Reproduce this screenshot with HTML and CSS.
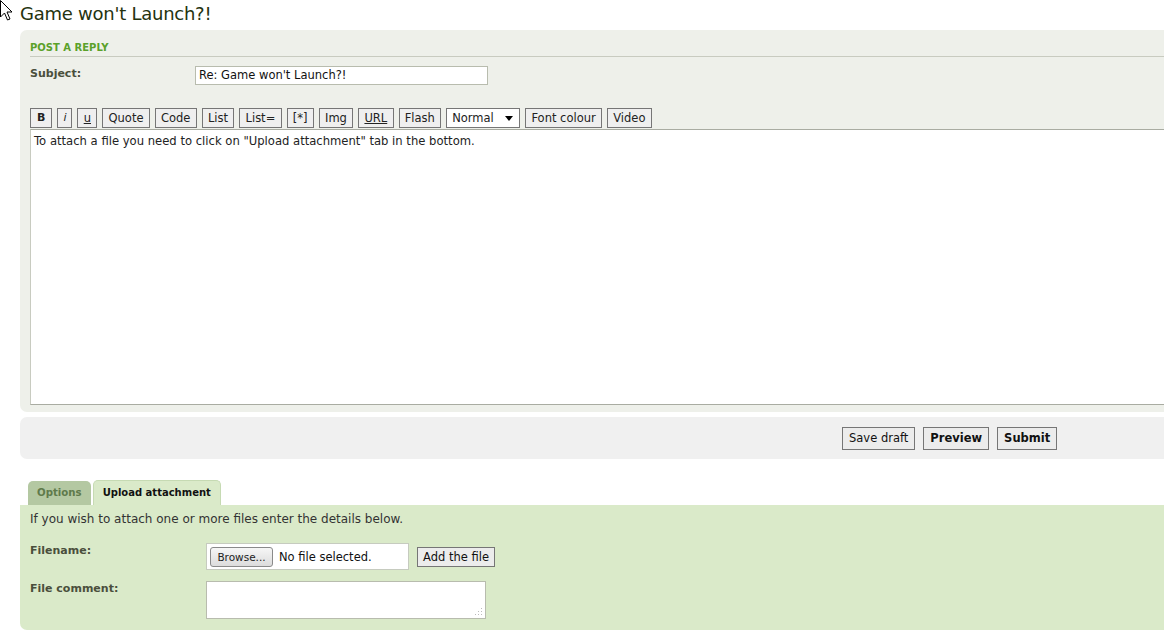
FILE: index.html
```html
<!DOCTYPE html>
<html>
<head>
<meta charset="utf-8">
<link rel="stylesheet" href="styles.css">
</head>
<body>
<svg class="cursor" width="13" height="21" viewBox="0 0 13 21"><path d="M0.5 0.5 L0.5 17 L4.5 13 L7.5 20 L10 19 L7 12 L12 12 Z" fill="#fff" stroke="#000" stroke-width="1"/></svg>
<div class="page">
  <h2 class="title">Game won't Launch?!</h2>

  <div class="panel post">
    <h3 class="ptitle">POST A REPLY</h3>
    <div class="subject-row">
      <label class="lbl">Subject:</label>
      <div class="input subject">Re: Game won't Launch?!</div>
    </div>
    <div class="toolbar">
      <span class="btn b">B</span>
      <span class="btn i">i</span>
      <span class="btn u">u</span>
      <span class="btn">Quote</span>
      <span class="btn">Code</span>
      <span class="btn">List</span>
      <span class="btn">List=</span>
      <span class="btn">[*]</span>
      <span class="btn">Img</span>
      <span class="btn u">URL</span>
      <span class="btn">Flash</span>
      <span class="select">Normal<svg width="8" height="5" viewBox="0 0 8 5"><path d="M0 0 H8 L4 5 Z" fill="#000"/></svg></span>
      <span class="btn">Font colour</span>
      <span class="btn">Video</span>
    </div>
    <div class="editor">To attach a file you need to click on "Upload attachment" tab in the bottom.</div>
  </div>

  <div class="panel actions">
    <span class="abtn">Save draft</span>
    <span class="abtn bold">Preview</span>
    <span class="abtn bold">Submit</span>
  </div>

  <div class="tabs">
    <span class="tab">Options</span>
    <span class="tab active">Upload attachment</span>
  </div>
  <div class="panel attach">
    <p class="intro">If you wish to attach one or more files enter the details below.</p>
    <div class="frow">
      <label class="lbl">Filename:</label>
      <div class="file"><span class="browse">Browse...</span><span class="nofile">No file selected.</span></div>
      <span class="addbtn">Add the file</span>
    </div>
    <div class="frow comment">
      <label class="lbl">File comment:</label>
      <div class="ta"><svg class="grip" width="8" height="8" viewBox="0 0 8 8"><g fill="#bbb"><rect x="6" y="0" width="1" height="1"/><rect x="3" y="3" width="1" height="1"/><rect x="6" y="3" width="1" height="1"/><rect x="0" y="6" width="1" height="1"/><rect x="3" y="6" width="1" height="1"/><rect x="6" y="6" width="1" height="1"/></g></svg></div>
    </div>
  </div>
</div>
</body>
</html>
```
FILE: styles.css
```css
html, body {
  margin: 0;
  padding: 0;
  background: #fff;
  overflow: hidden;
}
body {
  width: 1164px;
  height: 641px;
  position: relative;
  font-family: "DejaVu Sans", Verdana, sans-serif;
  font-size: 11px;
  color: #333;
}
.cursor {
  position: absolute;
  left: 0;
  top: 0;
}
.page {
  padding-left: 20px;
  width: 1300px;
}
.title {
  margin: 0;
  padding-top: 3px;
  height: 27px;
  font-size: 18px;
  letter-spacing: -0.25px;
  font-weight: normal;
  color: #25330f;
  line-height: 22px;
}
.panel {
  border-radius: 7px 0 0 7px;
}
.post {
  background: #eef0ea;
  padding: 9px 0 8px 10px;
  height: 365px;
}
.ptitle {
  margin: 0;
  font-size: 10px;
  font-weight: bold;
  color: #5ba12a;
  height: 17px;
  line-height: 17px;
  border-bottom: 1px solid #c8cbc0;
}
.subject-row {
  display: flex;
  align-items: flex-start;
  padding-top: 9px;
  height: 42px;
}
.lbl {
  font-weight: bold;
  color: #4a4f3c;
  width: 165px;
  line-height: 14px;
}
.subject-row .lbl {
  margin-top: 1px;
}
.input {
  box-sizing: border-box;
  background: #fff;
  border: 1px solid #b8bcae;
  height: 19px;
  line-height: 17px;
  padding: 0 3px;
  color: #111;
  font-size: 11.5px;
}
.subject {
  width: 293px;
}
.toolbar {
  display: flex;
  gap: 5px;
  height: 21px;
}
.btn, .select {
  box-sizing: border-box;
  height: 20px;
  border: 1px solid #767676;
  background: #efefef;
  padding: 0 5.25px;
  line-height: 18px;
  color: #222;
  font-size: 11.5px;
}
.btn.b { font-weight: bold; padding: 0 6px; font-size: 11px; }
.btn.i { font-style: italic; padding: 0 5px; font-size: 11px; }
.btn.u { text-decoration: underline; }
.select {
  width: 74px;
  background: #fff;
  display: flex;
  justify-content: space-between;
  align-items: center;
  padding: 0 6px 0 5px;
}
.editor {
  box-sizing: border-box;
  height: 276px;
  background: #fff;
  border-top: 1px solid #a9aca2;
  border-left: 1px solid #c8cbc0;
  border-bottom: 1px solid #a9aca2;
  padding: 4px 3px;
  color: #222;
  line-height: 14px;
  font-size: 11.6px;
}
.actions {
  margin-top: 5px;
  background: #f0f0f0;
  height: 42px;
  display: flex;
  align-items: center;
  gap: 8px;
  padding-left: 822px;
}
.abtn {
  box-sizing: border-box;
  height: 23px;
  border: 1px solid #767676;
  background: #ececec;
  padding: 0 6px;
  line-height: 21px;
  font-size: 11.5px;
  color: #111;
}
.abtn.bold { font-weight: bold; }
.tabs {
  margin-top: 22px;
  padding-left: 8px;
  display: flex;
  gap: 2px;
  height: 24px;
  align-items: flex-end;
}
.tab {
  box-sizing: border-box;
  height: 24px;
  line-height: 24px;
  border-radius: 5px 5px 0 0;
  font-weight: bold;
  font-size: 10.2px;
  padding: 0 9px;
  background: #b4c8a2;
  color: #5f7a4b;
}
.tab.active {
  background: #daeac9;
  color: #111;
  border: 1px solid #c6dab3;
  border-bottom: none;
  height: 25px;
  padding: 0 9px;
  line-height: 23px;
  font-size: 10px;
}
.attach {
  background: #daeac9;
  height: 125px;
  padding: 7px 0 0 10px;
  box-sizing: border-box;
  border-radius: 0 0 0 7px;
}
.intro {
  margin: 0;
  font-size: 12px;
  line-height: 15px;
  color: #333;
  height: 31px;
}
.frow {
  display: flex;
  align-items: flex-start;
}
.frow .lbl {
  width: 176px;
  margin-top: 1px;
}
.file {
  box-sizing: border-box;
  width: 203px;
  height: 27px;
  background: #fff;
  border: 1px solid #c6cbbf;
  display: flex;
  align-items: center;
  padding-left: 3px;
  gap: 6px;
}
.browse {
  box-sizing: border-box;
  height: 20px;
  width: 63px;
  border: 1px solid #8a8a8a;
  border-radius: 3px;
  background: linear-gradient(#f6f6f6, #dcdcdc);
  text-align: center;
  line-height: 18px;
  font-size: 10.5px;
  color: #222;
}
.nofile {
  font-size: 11.5px;
  color: #111;
}
.addbtn {
  box-sizing: border-box;
  margin-left: 8px;
  margin-top: 4px;
  height: 20px;
  border: 1px solid #767676;
  background: #ececec;
  padding: 0 5px;
  line-height: 18px;
  font-size: 11.5px;
  color: #111;
}
.comment {
  margin-top: 11px;
}
.comment .lbl {
  margin-top: 1px;
}
.ta {
  box-sizing: border-box;
  width: 280px;
  height: 38px;
  background: #fff;
  border: 1px solid #b8bcae;
  position: relative;
}
.grip {
  position: absolute;
  right: 2px;
  bottom: 2px;
}
```
